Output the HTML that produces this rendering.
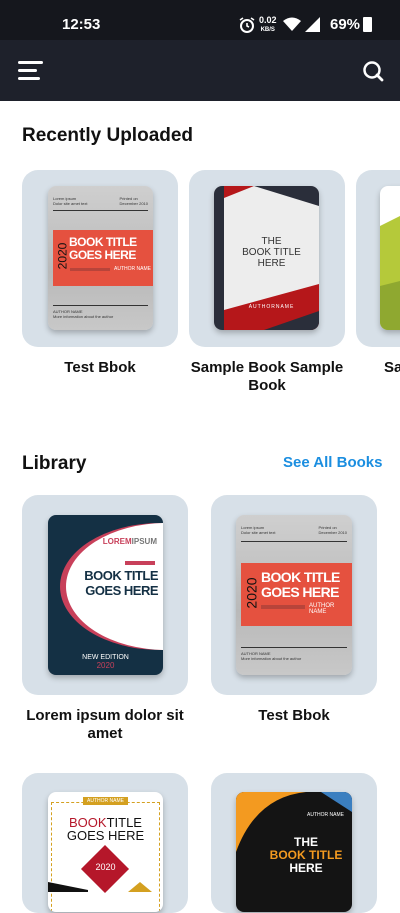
<!DOCTYPE html>
<html><head><meta charset="utf-8"><style>
*{margin:0;padding:0;box-sizing:border-box}
body{width:400px;height:889px;overflow:hidden;background:#fff;font-family:"Liberation Sans",sans-serif;position:relative}
.abs{position:absolute}
.card{position:absolute;background:#d7e0e8;border-radius:16px}
.cov{position:absolute;border-radius:8px;overflow:hidden;box-shadow:0 3px 6px rgba(0,0,0,.25)}
.t{position:absolute;text-align:center;font-size:15px;font-weight:bold;color:#111;line-height:18px}
h2{position:absolute;font-size:19px;font-weight:bold;color:#111}
.gray{background:linear-gradient(180deg,#cfcfcf,#b9b9b9 60%,#c8c8c8)}
.s{font-size:4px;color:#333;position:absolute;line-height:5px}
</style></head><body>
<div class="abs" style="left:0;top:0;width:400px;height:40px;background:#15171d"></div>
<div class="abs" style="left:62px;top:16px;color:#fff;font-size:15px;font-weight:bold">12:53</div>
<svg class="abs" style="left:238px;top:16px" width="18" height="18" viewBox="0 0 18 18"><circle cx="9" cy="10" r="6" fill="none" stroke="#fff" stroke-width="2"/><path d="M9 7v3l2 1M2 4l3-2M16 4l-3-2" stroke="#fff" stroke-width="1.6" fill="none"/></svg>
<div class="abs" style="left:259px;top:16px;color:#fff;font-size:9px;font-weight:bold;line-height:8px;text-align:center">0.02<br><span style="font-size:6px">KB/S</span></div>
<svg class="abs" style="left:283px;top:17px" width="18" height="15"><path d="M0 4Q9-3 18 4L9 14Z" fill="#fff"/></svg>
<svg class="abs" style="left:305px;top:17px" width="15" height="15"><path d="M15 0V15H0Z" fill="#fff"/></svg>
<div class="abs" style="left:330px;top:16px;color:#fff;font-size:15px;font-weight:bold">69%</div>
<div class="abs" style="left:363px;top:17px;width:9px;height:15px;background:#fff;border-radius:1px"></div>
<div class="abs" style="left:0;top:40px;width:400px;height:61px;background:#1e212b"></div>
<div class="abs" style="left:18px;top:61px;width:25px;height:3px;background:#fff;border-radius:2px"></div>
<div class="abs" style="left:18px;top:69px;width:19px;height:3px;background:#fff;border-radius:2px"></div>
<div class="abs" style="left:18px;top:77px;width:22px;height:3px;background:#fff;border-radius:2px"></div>
<svg class="abs" style="left:362px;top:60px" width="22" height="22"><circle cx="10" cy="10" r="7.5" fill="none" stroke="#fff" stroke-width="2.5"/><path d="M15 15l5 5" stroke="#fff" stroke-width="2.8" stroke-linecap="round"/></svg>

<h2 style="left:22px;top:125px">Recently Uploaded</h2>

<div class="card" style="left:22px;top:170px;width:156px;height:177px"></div>
<div class="cov gray" style="left:48px;top:186px;width:105px;height:144px">
 <div class="s" style="left:5px;top:10px">Lorem ipsum<br>Dolor site amet text</div>
 <div class="s" style="right:5px;top:10px">Printed on<br>December 2010</div>
 <div class="abs" style="left:5px;top:24px;width:95px;height:1px;background:#333"></div>
 <div class="abs" style="left:5px;top:44px;width:100px;height:56px;background:#e5513f"></div>
 <div class="abs" style="left:1px;top:63px;transform:rotate(-90deg);font-size:12px;color:#111">2020</div>
 <div class="abs" style="left:21px;top:50px;color:#fff;font-size:12px;font-weight:bold;line-height:13px;letter-spacing:-0.5px">BOOK TITLE<br>GOES HERE</div>
 <div class="abs" style="left:22px;top:82px;width:40px;height:3px;background:#b8443a"></div>
 <div class="abs" style="left:66px;top:80px;color:#fff;font-size:5px">AUTHOR NAME</div>
 <div class="abs" style="left:5px;top:119px;width:95px;height:1px;background:#333"></div>
 <div class="s" style="left:5px;top:123px">AUTHOR NAME<br>More information about the author</div>
</div>
<div class="card" style="left:189px;top:170px;width:156px;height:177px"></div>
<div class="cov" style="left:214px;top:186px;width:105px;height:144px;background:#ededed">
 <div class="abs" style="left:0;top:0;width:10px;height:144px;background:#2a2e3a"></div>
 <svg class="abs" style="left:10px;top:0" width="95" height="144"><path d="M0 0H30L0 12Z" fill="#b5171a"/><path d="M30 0H95V20Z" fill="#2a2e3a"/><path d="M0 124L95 98V144H0Z" fill="#b5171a"/><path d="M40 144L95 125V144Z" fill="#2a2e3a"/></svg>
 <div class="abs" style="left:10px;width:95px;top:50px;text-align:center;font-size:10px;color:#333;line-height:11px">THE<br>BOOK TITLE<br>HERE</div>
 <div class="abs" style="left:10px;width:95px;top:118px;text-align:center;font-size:5px;color:#fff;letter-spacing:1px">AUTHORNAME</div>
</div>
<div class="card" style="left:356px;top:170px;width:156px;height:177px"></div>
<div class="cov" style="left:380px;top:186px;width:40px;height:144px;background:#fff">
 <svg class="abs" width="40" height="144"><path d="M0 40L40 20V144H0Z" fill="#b5c93a"/><path d="M0 100L40 90V144H0Z" fill="#8fa830"/></svg>
</div>
<div class="t" style="left:22px;width:156px;top:359px">Test Bbok</div>
<div class="t" style="left:185px;width:164px;top:359px">Sample Book Sample Book</div>
<div class="t" style="left:384px;top:359px">Sa</div>

<h2 style="left:22px;top:453px">Library</h2>
<div class="abs" style="left:283px;top:454px;color:#1b8ee0;font-size:15px;font-weight:bold">See All Books</div>

<div class="card" style="left:22px;top:495px;width:166px;height:200px"></div>
<div class="cov" style="left:48px;top:515px;width:115px;height:160px;background:#143044">
 <div class="abs" style="left:12px;top:8px;width:200px;height:127px;border-radius:50%;background:#c8405a"></div>
 <div class="abs" style="left:18px;top:8px;width:200px;height:127px;border-radius:50%;background:#fff"></div>
 <div class="abs" style="right:6px;top:22px;font-size:8px;font-weight:bold;color:#c8405a">LOREM<span style="color:#777">IPSUM</span></div>
 <div class="abs" style="right:8px;top:46px;width:30px;height:4px;background:#c8405a"></div>
 <div class="abs" style="right:5px;top:53px;text-align:right;font-size:13px;font-weight:bold;color:#143044;line-height:15px;letter-spacing:-0.5px">BOOK TITLE<br>GOES HERE</div>
 <div class="abs" style="left:0;width:115px;top:139px;text-align:center;font-size:7px;color:#fff;line-height:8px">NEW EDITION<br><span style="color:#c8405a;font-size:8px">2020</span></div>
</div>
<div class="card" style="left:211px;top:495px;width:166px;height:200px"></div>
<div class="cov gray" style="left:236px;top:515px;width:116px;height:160px">
 <div class="s" style="left:5px;top:10px">Lorem ipsum<br>Dolor site amet text</div>
 <div class="s" style="right:5px;top:10px">Printed on<br>December 2010</div>
 <div class="abs" style="left:5px;top:26px;width:106px;height:1px;background:#333"></div>
 <div class="abs" style="left:5px;top:48px;width:111px;height:63px;background:#e5513f"></div>
 <div class="abs" style="left:0px;top:70px;transform:rotate(-90deg);font-size:14px;color:#111">2020</div>
 <div class="abs" style="left:25px;top:55px;color:#fff;font-size:14px;font-weight:bold;line-height:15px;letter-spacing:-0.6px">BOOK TITLE<br>GOES HERE</div>
 <div class="abs" style="left:25px;top:90px;width:44px;height:4px;background:#b8443a"></div>
 <div class="abs" style="left:73px;top:88px;color:#fff;font-size:6px">AUTHOR NAME</div>
 <div class="abs" style="left:5px;top:132px;width:106px;height:1px;background:#333"></div>
 <div class="s" style="left:5px;top:136px">AUTHOR NAME<br>More information about the author</div>
</div>
<div class="t" style="left:22px;width:166px;top:707px">Lorem ipsum dolor sit amet</div>
<div class="t" style="left:211px;width:166px;top:707px">Test Bbok</div>

<div class="card" style="left:22px;top:773px;width:166px;height:140px"></div>
<div class="cov" style="left:48px;top:792px;width:115px;height:120px;background:#fff">
 <div class="abs" style="left:3px;top:10px;width:109px;height:110px;border:1px dashed #d4a020;border-bottom:none"></div>
 <div class="abs" style="left:35px;top:5px;width:45px;height:8px;background:#d4a020;color:#fff;font-size:5px;text-align:center;line-height:8px">AUTHOR NAME</div>
 <div class="abs" style="left:0;width:115px;top:24px;text-align:center;font-size:13px;line-height:13px;color:#111"><span style="color:#b5172a">BOOK</span>TITLE<br>GOES HERE</div>
 <div class="abs" style="left:40px;top:60px;width:34px;height:34px;background:#b5172a;transform:rotate(45deg)"></div>
 <div class="abs" style="left:0;width:115px;top:70px;text-align:center;color:#fff;font-size:9px">2020</div>
 <svg class="abs" style="left:0;top:80px" width="115" height="20"><path d="M0 10L40 18V20H0Z" fill="#111"/><path d="M80 20L92 10L104 20Z" fill="#d4a020"/></svg>
</div>
<div class="card" style="left:211px;top:773px;width:166px;height:140px"></div>
<div class="cov" style="left:236px;top:792px;width:116px;height:120px;background:#141414">
 <svg class="abs" width="116" height="120"><path d="M0 0H70Q20 5 0 60Z" fill="#f39a20"/><path d="M85 0H116V20Z" fill="#3b7fc0"/></svg>
 <div class="abs" style="right:8px;top:20px;font-size:5px;color:#fff">AUTHOR NAME</div>
 <div class="abs" style="left:30px;width:80px;top:44px;text-align:center;font-size:12px;font-weight:bold;color:#fff;line-height:13px">THE<br><span style="color:#f39a20">BOOK TITLE</span><br>HERE</div>
</div>
</body></html>
